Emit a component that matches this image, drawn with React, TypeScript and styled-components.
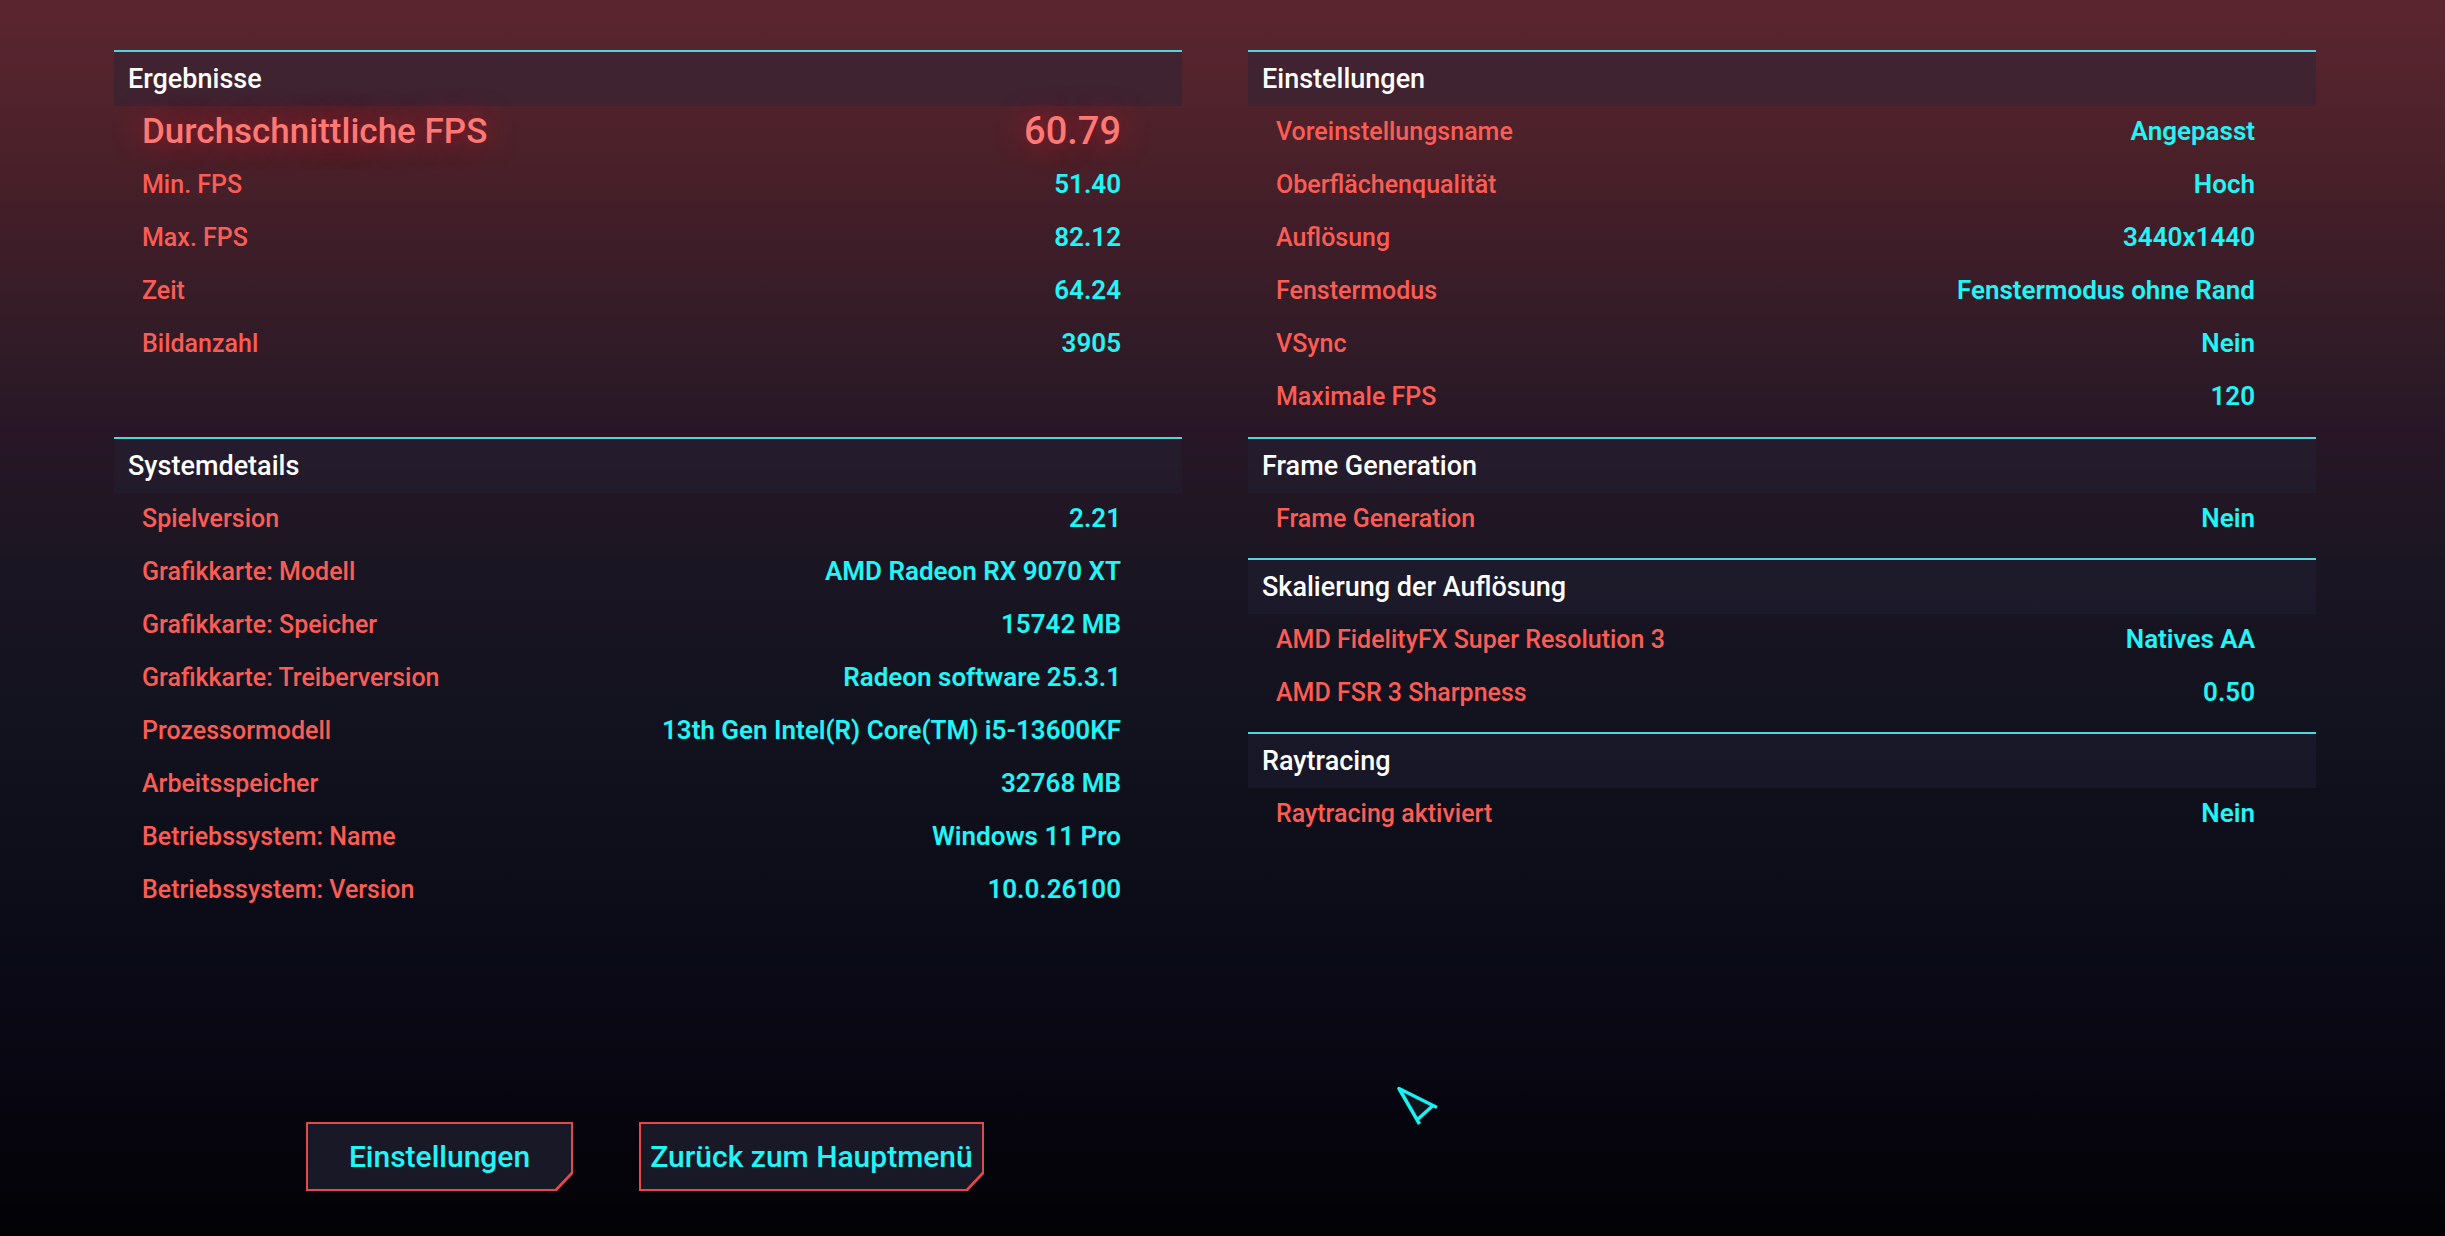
import React from "react";
import styled, { createGlobalStyle, css } from "styled-components";

const GlobalStyle = createGlobalStyle`
  * {
    box-sizing: border-box;
  }

  body {
    margin: 0;
    background: #020205;
    font-family: Roboto, "Liberation Sans", sans-serif;
  }
`;

const Screen = styled.main`
  position: relative;
  display: flex;
  flex-direction: column;
  min-height: 100vh;
  padding: 50px 129px 45px 114px;
  background: linear-gradient(
    to bottom,
    #5b252f 0%,
    #52232c 7%,
    #4a2029 13%,
    #3d1d28 20%,
    #2f1b26 29%,
    #281626 35%,
    #211623 41%,
    #1a1522 46%,
    #13121f 57%,
    #0c0b18 74%,
    #070611 88%,
    #020205 100%
  );
`;

const Panels = styled.div`
  display: grid;
  grid-template-columns: 1fr 1fr;
  column-gap: 66px;
  row-gap: 16px;
`;

const Stack = styled.div`
  display: flex;
  flex-direction: column;
  gap: 15px;
`;

const Heading = styled.h2`
  display: flex;
  align-items: center;
  height: 56px;
  margin: 0;
  padding: 0 14px;
  border-top: 2px solid #4fd5e0;
  background: rgba(36, 35, 58, 0.4);
  background-clip: padding-box;
  color: #ffffff;
  font-size: 27px;
  font-weight: 500;
`;

const Rows = styled.dl`
  display: flex;
  flex-direction: column;
  gap: 3px;
  margin: 0;
  padding: 0 61px 0 28px;
`;

const Row = styled.div`
  display: flex;
  align-items: center;
  justify-content: space-between;
  height: 50px;
`;

const highlighted = css`
  color: #ff7873;
  font-weight: 500;
  text-shadow: 0 0 28px rgba(255, 20, 45, 0.6);
`;

const Label = styled.dt<{ $highlight?: boolean }>`
  color: #fb5c54;
  font-size: ${({ $highlight }) => ($highlight ? 35 : 25)}px;
  font-weight: 500;
  ${({ $highlight }) => $highlight && highlighted}
`;

const Value = styled.dd<{ $highlight?: boolean }>`
  margin: 0;
  color: #22f5f7;
  font-size: ${({ $highlight }) => ($highlight ? 38 : 26)}px;
  font-weight: 600;
  ${({ $highlight }) => $highlight && highlighted}
`;

const Actions = styled.nav`
  display: flex;
  gap: 66px;
  margin-top: auto;
  padding-left: 192px;
`;

const cutCorner = css`
  clip-path: polygon(0 0, 100% 0, 100% calc(100% - 17px), calc(100% - 16px) 100%, 0 100%);
`;

const ActionButton = styled.button<{ $width: number }>`
  position: relative;
  isolation: isolate;
  width: ${({ $width }) => $width}px;
  height: 69px;
  padding: 0;
  border: 0;
  background: #e5484a;
  color: #22f5f7;
  font-family: inherit;
  font-size: 30px;
  font-weight: 500;
  white-space: nowrap;
  cursor: pointer;
  ${cutCorner}

  &::before {
    content: "";
    position: absolute;
    inset: 2px;
    z-index: -1;
    background: #191827;
    ${cutCorner}
  }
`;

const Pointer = styled.svg`
  position: absolute;
  left: 1396px;
  top: 1084px;
  pointer-events: none;
`;

type Entry = { label: string; value: string; highlight?: boolean };

const results: Entry[] = [
  { label: "Durchschnittliche FPS", value: "60.79", highlight: true },
  { label: "Min. FPS", value: "51.40" },
  { label: "Max. FPS", value: "82.12" },
  { label: "Zeit", value: "64.24" },
  { label: "Bildanzahl", value: "3905" },
];

const settings: Entry[] = [
  { label: "Voreinstellungsname", value: "Angepasst" },
  { label: "Oberflächenqualität", value: "Hoch" },
  { label: "Auflösung", value: "3440x1440" },
  { label: "Fenstermodus", value: "Fenstermodus ohne Rand" },
  { label: "VSync", value: "Nein" },
  { label: "Maximale FPS", value: "120" },
];

const system: Entry[] = [
  { label: "Spielversion", value: "2.21" },
  { label: "Grafikkarte: Modell", value: "AMD Radeon RX 9070 XT" },
  { label: "Grafikkarte: Speicher", value: "15742 MB" },
  { label: "Grafikkarte: Treiberversion", value: "Radeon software 25.3.1" },
  { label: "Prozessormodell", value: "13th Gen Intel(R) Core(TM) i5-13600KF" },
  { label: "Arbeitsspeicher", value: "32768 MB" },
  { label: "Betriebssystem: Name", value: "Windows 11 Pro" },
  { label: "Betriebssystem: Version", value: "10.0.26100" },
];

const frameGeneration: Entry[] = [{ label: "Frame Generation", value: "Nein" }];

const scaling: Entry[] = [
  { label: "AMD FidelityFX Super Resolution 3", value: "Natives AA" },
  { label: "AMD FSR 3 Sharpness", value: "0.50" },
];

const raytracing: Entry[] = [{ label: "Raytracing aktiviert", value: "Nein" }];

function Section({ title, entries }: { title: string; entries: Entry[] }) {
  return (
    <section>
      <Heading>{title}</Heading>
      <Rows>
        {entries.map(({ label, value, highlight }) => (
          <Row key={label}>
            <Label $highlight={highlight}>{label}</Label>
            <Value $highlight={highlight}>{value}</Value>
          </Row>
        ))}
      </Rows>
    </section>
  );
}

export default function App() {
  return (
    <>
      <GlobalStyle />
      <Screen>
        <Panels>
          <Section title="Ergebnisse" entries={results} />
          <Section title="Einstellungen" entries={settings} />
          <Section title="Systemdetails" entries={system} />
          <Stack>
            <Section title="Frame Generation" entries={frameGeneration} />
            <Section title="Skalierung der Auflösung" entries={scaling} />
            <Section title="Raytracing" entries={raytracing} />
          </Stack>
        </Panels>
        <Actions>
          <ActionButton type="button" $width={267}>
            Einstellungen
          </ActionButton>
          <ActionButton type="button" $width={345}>
            Zurück zum Hauptmenü
          </ActionButton>
        </Actions>
        <Pointer width="44" height="44" viewBox="0 0 44 44" fill="none" aria-hidden="true">
          <path d="M4 5 L37 21 L22 36 Z" fill="#12121f" />
          <path
            d="M41 23.500 L3 4.500 L23.500 40 M37 21.500 L21.500 35.500"
            stroke="#16f2f2"
            strokeWidth="3.500"
            strokeLinejoin="round"
          />
        </Pointer>
      </Screen>
    </>
  );
}
